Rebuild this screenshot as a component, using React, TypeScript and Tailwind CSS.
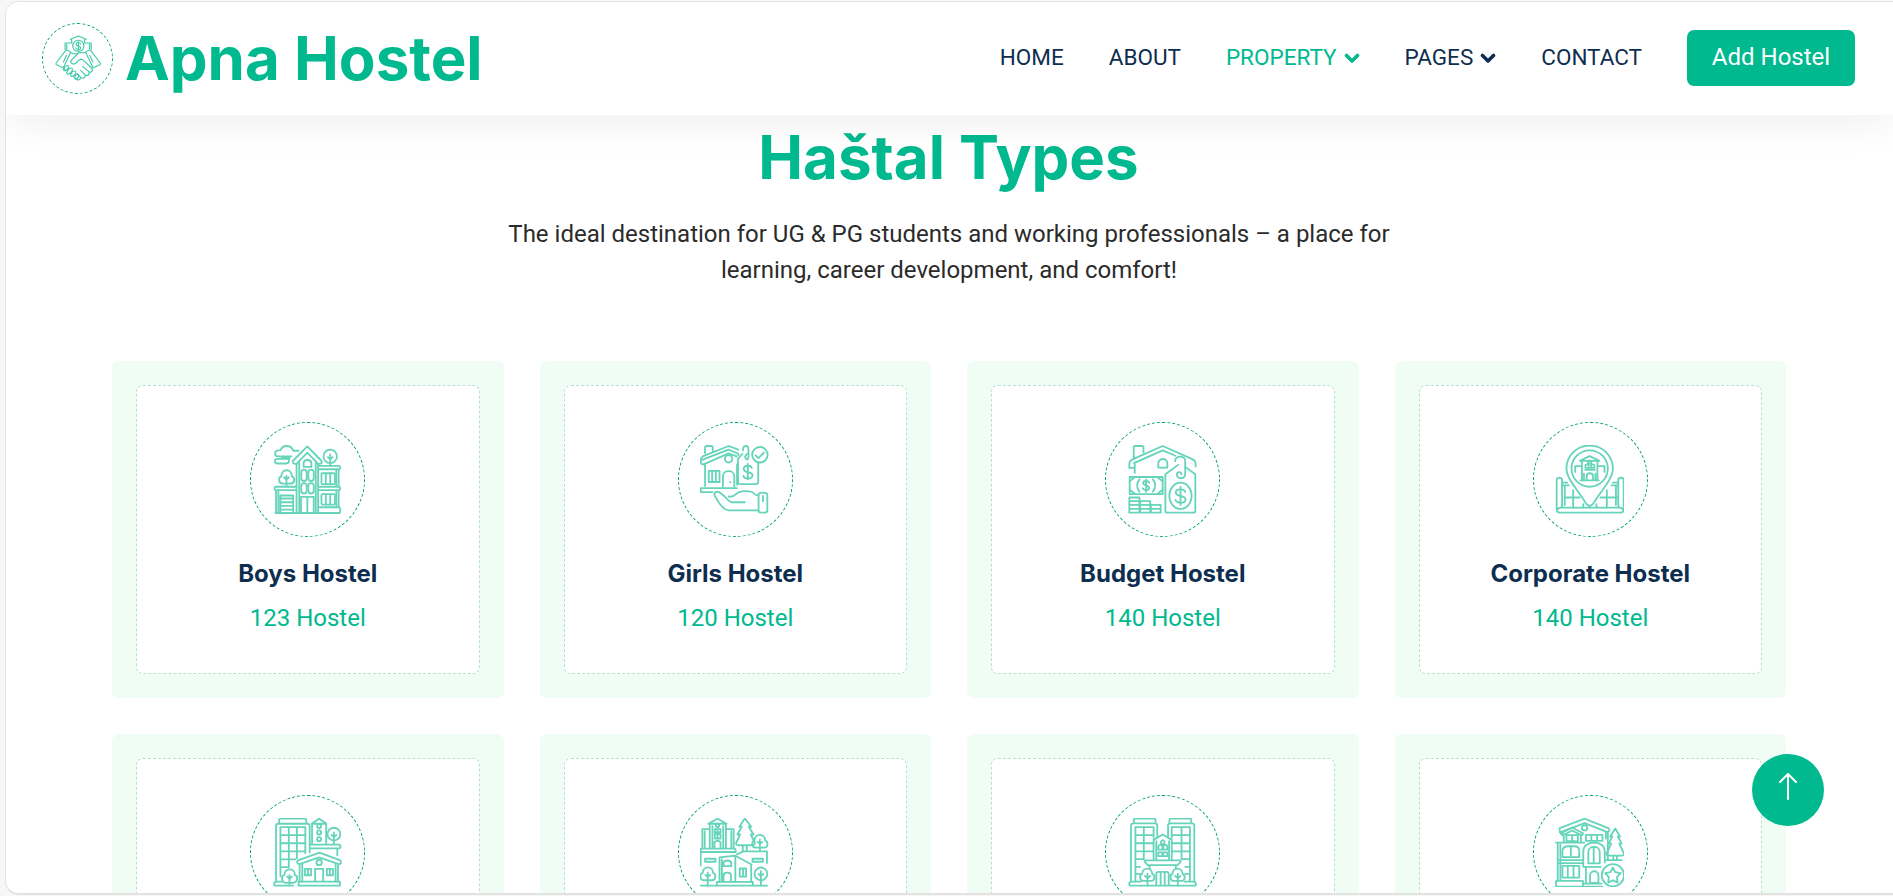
import React from "react";

type IconProps = { className?: string };

const stroke = {
  fill: "none",
  stroke: "#00b98e",
  strokeWidth: 5.4,
  strokeLinecap: "round" as const,
  strokeLinejoin: "round" as const,
};

function Art({ top, children }: { top: number; children: React.ReactNode }) {
  return (
    <svg viewBox={`100 ${top} 205 205`} className="mr-px mb-px size-[69px] opacity-60" {...stroke}>
      {children}
    </svg>
  );
}

function TownHouse() {
  return (
    <Art top={90}>
      <path d="M176 107h-16c-3-9-9-14-20-14-9 0-15 6-17 12-10 0-17 4-17 10s5 9 11 9h38" />
      <path d="M126 126h23M149 131h-35c-11 0-12 14 0 14h24c10 0 12-8 8-12" />
      <path d="M202 94l-42 42c-4 4 0 10 5 10h5l32-33 32 33h5c6 0 8-6 4-10z" />
      <path d="M170 146v146M234 146v146M178 142v150M227 142v150" />
      <path d="M191 155v-10c0-14 23-14 23 0v10z" />
      <rect x="184" y="163" width="16" height="34" rx="8" /><rect x="205" y="163" width="16" height="34" rx="8" />
      <rect x="184" y="203" width="16" height="31" rx="8" /><rect x="205" y="203" width="16" height="31" rx="8" />
      <path d="M183 292v-48h38v48M202 244v48" />
      <circle cx="270" cy="124" r="20" /><path d="M270 118v34M263 126l7 7 7-7" />
      <path d="M236 152h60c5 0 5 10 0 10h-60M295 163v50M288 163v50M236 214h60c5 0 5 10 0 10h-60M295 225v50M288 225v50M236 275h60c5 0 5 17 0 17" />
      <rect x="244" y="174" width="40" height="32" rx="3" /><path d="M257 174v32M270 174v32" />
      <rect x="244" y="236" width="40" height="31" rx="3" /><path d="M257 236v31M270 236v31" />
      <path d="M130 205c-14 0-16-18-5-22 0-24 31-24 31 0 11 4 9 22-5 22zM140 182v30M133 186l7 7 7-7" />
      <path d="M168 214h-60c-5 0-5 10 0 10h60M109 225v67M116 225v67M122 292v-52h38v52M122 249h38M122 260h38M122 271h38M122 282h38M107 292h190" />
    </Art>
  );
}

function HouseInHand() {
  return (
    <Art top={90}>
      <path d="M115 114V98q0-5 5-5h13q5 0 5 5v10" />
      <path d="M214 104l-29-11-77 31c-6 3-6 9-6 14 0 8 4 12 12 8l71-31 24 9M214 120v-4l-29-12-79 30" />
      <path d="M115 148v64M210 148v60M102 218h108M102 230h35M102 218v8q0 4 5 4" />
      <circle cx="185" cy="131" r="11" />
      <rect x="126" y="167" width="32" height="33" /><path d="M136 167v33M147 167v33" />
      <path d="M168 214v-32c0-19 34-19 34 0v32M190 200v1" />
      <path d="M228 106c0-18 16-18 16 0v20c0 8-5 8-8 5l-2-7 5-7M226 116l-13 15v69q0 6 6 6h48q6 0 6-6v-55" />
      <path d="M254 158c-3-9-24-9-24 3 0 14 26 6 26 19 0 13-24 12-27 2M242 146v46" />
      <circle cx="278" cy="119" r="23" /><path d="M265 121l8 8 17-16" />
      <path d="M233 260h-38c-11 0-24-24-39-30-11-4-16 4-12 11 9 17 25 43 42 43h87M185 243c8 2 16-1 22-7 12-12 46-11 53-2 5 6 8 6 14 6" />
      <rect x="274" y="232" width="26" height="59" rx="7" /><path d="M287 241v16" />
    </Art>
  );
}

function Budget() {
  return (
    <Art top={90}>
      <path d="M117 132V97q0-4 4-4h21q4 0 4 4v15M104 158v-12q0-10 11-14l88-39 88 39q10 4 10 14v8M104 158h16M120 160v13M118 144l85-38 38 16M120 158v-12" />
      <path d="M190 157v-12c0-18 27-18 27 0v12z" />
      <path d="M211 285V177l38-28M211 285q0 6 6 6h77q6 0 6-6V177l-30-22" />
      <path d="M240 138c0-18 30-18 30 0v36c0 20-25 18-25 4 0-10 14-10 14-1" />
      <ellipse cx="256" cy="241" rx="33" ry="39" />
      <path d="M270 229c-3-10-28-10-28 2 0 15 29 6 29 21 0 13-26 12-30 1M256 214v54" />
      <path d="M203 185h-98v51h98z" />
      <path d="M163 202c-3-7-18-7-18 1 0 9 18 5 18 15 0 8-16 8-19 1M154 192v37M105 198l15-12M105 223l15 12M203 198l-15-12M203 223l-15 12M134 192q-14 18 0 37M174 192q14 18 0 37" />
      <path d="M104 246h30v45h-30zM104 257h62v34M104 268h93v23h-93M104 280h93M136 257v34M168 268v23" />
    </Art>
  );
}

function MapPin() {
  return (
    <Art top={90}>
      <path d="M203 92c-39 0-69 30-69 68 0 31 35 64 57 102 7 11 18 11 24 0 23-38 57-71 57-102 0-38-30-68-69-68z" />
      <circle cx="203" cy="160" r="54" />
      <path d="M180 195v-58M226 195v-58M174 137l29-14 29 14zM160 170v-17h20M247 170v-17h-20M176 195h54M194 195v-12c0-12 19-12 19 0v12M186 195v-20M220 195v-20M190 158h28M190 164h28" />
      <circle cx="203" cy="141" r="5" /><path d="M190 153c0-7 10-7 10 0M207 153c0-7 10-7 10 0" />
      <path d="M105 282v-87c0-11 16-11 16 0v81h167v-81c0-11 16-11 16 0v87q0 9-9 9H114q-9 0-9-9zM121 276q-9-2-14 6M288 276q9-2 14 6" />
      <path d="M121 202h16M272 202h16M129 212v56M281 212v56M121 210h20M268 210h20M129 246h44M235 246h53M154 224v52M254 224v52M184 266v10M223 266v10M203 272v4" />
    </Art>
  );
}

function Apartments() {
  return (
    <Art top={97}>
      <path d="M118 113v-9q0-5 5-5h71q5 0 5 5v9M109 286V121q0-7 7-7h86q7 0 7 7v78M122 270V124h74v78M147 124v120M171 124v92M122 148h74M122 172h74M122 196h74M122 220h45M122 243h22" />
      <path d="M216 174v-61l21-14 21 14v61M216 114h42" />
      <circle cx="237" cy="121" r="6" /><circle cx="237" cy="140" r="6" /><circle cx="237" cy="160" r="6" />
      <circle cx="281" cy="145" r="19" /><path d="M281 140v35M274 147l7 7 7-7" />
      <path d="M212 176h84c6 0 6 11 0 11h-84M291 188v20" />
      <path d="M238 200l-62 22c-7 4-5 12 3 12l58-20 58 20c9 0 9-8 3-12zM179 234v52M293 234v52M187 234v52M286 234v52" />
      <circle cx="237" cy="229" r="8" />
      <path d="M225 284v-36h24v36M195 248h18v19h-18zM260 248h18v19h-18zM204 248v19M269 248v19M176 286h123v12H176z" />
      <path d="M139 290c-15-2-16-21-5-24 0-22 31-22 31 0 11 4 9 22-5 24zM149 266v32M142 271l7 7 7-7M128 286h-16c-12 0-9 12-6 12h54" />
    </Art>
  );
}

function CityBlock() {
  return (
    <Art top={97}>
      <path d="M129 185v-71M177 185v-71M125 114l27-15 27 15zM107 187v-57h22M200 187v-57h-23M114 184v-48M193 184v-48M137 185v-64M169 185v-64M143 186v-17q9-9 18 0v17" />
      <circle cx="152" cy="119" r="5" />
      <path d="M144 130h17v10h-17zM144 145h17v13h-17zM152 130v28M102 188h99q5 0 5 5v6M102 188v50M102 198h103" />
      <path d="M233 98l-16 25h7l-13 23h8l-11 23q-3 9 6 9h42q9 0 6-9l-11-23h8l-14-23h7zM227 179v17M239 179v17M210 205l19-9h70v35" />
      <path d="M265 185c-12 0-13-18-3-21 1-23 31-22 32 0 10 4 8 21-3 21zM278 161v35M271 168l7 6 7-6" />
      <path d="M158 214l47-5 48 26M158 216v71M252 235v52M165 220v64M205 210v77M170 240v-7c0-13 23-13 23 0v7zM170 286v-19c0-10 22-10 22 0v19M218 247h19v24h-19zM228 247v24" />
      <path d="M115 218h31v9h-31zM256 218h31v9h-31zM150 298v-11h107v11M102 298h197" />
      <path d="M111 282c-12 0-13-19-3-22 1-22 30-22 31 0 10 4 8 22-3 22zM123 259v38M116 266l7 7 7-7" />
      <circle cx="281" cy="263" r="19" /><path d="M281 255v42M274 263l7 7 7-7" />
    </Art>
  );
}

function TwinTowers() {
  return (
    <Art top={97}>
      <path d="M117 113v-9q0-5 5-5h55q5 0 5 5v9M109 286V120q0-7 7-7h64q7 0 7 7v34M122 284V124h54v32M147 124v96M122 148h53M122 172h53M122 196h52M122 219h22M122 242h14M122 263h14" />
      <path d="M223 113v-9q0-5 5-5h55q5 0 5 5v9M297 286V120q0-7-7-7h-64q-7 0-7 7v34M284 284V124h-54v32M259 124v96M284 148h-53M284 172h-53M284 196h-52M284 219h-22M284 242h-14M284 263h-14" />
      <path d="M176 220v-58l27-16 27 16v58M184 220v-54M222 220v-54" />
      <path d="M198 175v-7q5-10 10 0v7zM190 184q0-7 6-7t6 7v7h-12zM205 184q0-7 6-7t6 7v7h-12zM190 199h12v11h-12zM205 199h12v11h-12z" />
      <path d="M153 223h99q7 0 3 6l-8 8h-88l-8-8q-4-6 2-6zM164 238v10M242 238v10" />
      <path d="M146 284c-12 0-13-18-4-21 1-21 29-21 30 0 10 4 8 21-3 21zM158 262v36M150 269l8 7 8-7" />
      <path d="M236 284c-12 0-13-18-4-21 1-21 29-21 30 0 10 4 8 21-3 21zM248 262v36M240 269l8 7 8-7" />
      <path d="M184 298v-34q0-7 7-7h23q7 0 7 7v34M197 257v41M209 257v41M138 286h-27c-10 0-8 12-5 12h193c4 0 5-12-5-12h-26" />
    </Art>
  );
}

function Villa() {
  return (
    <Art top={233}>
      <path d="M114 275v-12l74-28 70 28q6 4 2 9-4 4-10 1l-62-25-73 28M124 280l-6 0M251 274v20M257 274v84" />
      <circle cx="188" cy="262" r="8" />
      <path d="M118 279l33-18 33 18-5 6-28-15-28 15zM126 283v22M177 283v22M134 302v-18h34v18zM151 284v18M192 283h49v18h-49zM208 283v18M225 283v18" />
      <path d="M103 306h84M108 307v111M116 312v106M108 358h76M108 367h76M103 420h80v17h-80z" />
      <path d="M122 349v-18q2-14 16-14h20q14 0 14 14v18zM147 318v31M122 375h50v35h-50zM138 375v35M155 375v35" />
      <path d="M184 378v-45c0-36 64-36 64 0v32M199 368v-34c0-20 34-20 34 0v34zM215 320v48M184 378h52M192 378v50M184 428h54M184 437h56" />
      <path d="M204 426v-22c0-17 25-17 25 0v22z" />
      <path d="M279 264l-15 24h6l-10 21h7l-13 28q-2 8 6 8h38q8 0 6-8l-13-28h7l-11-21h6zM273 346v11M284 346v11M252 358h46" />
      <circle cx="272" cy="403" r="33" /><path d="M272 380l7 14 16 3-11 12 2 16-14-7-14 7 2-16-11-12 16-3z" />
    </Art>
  );
}

function Handshake({ className }: IconProps) {
  return (
    <svg viewBox="163 106 138 139" className={className} {...stroke} strokeWidth={3.4}>
      <path d="M193 150v-20h20v-12M272 150v-20h-20v-12M209 119l24-10 24 10M198 134v15M267 134v15" />
      <circle cx="233" cy="139" r="17" />
      <path d="M240 133c-2-6-14-6-14 1 0 8 14 3 14 11 0 7-13 6-15 0M233 126v27" />
      <path d="M193 155q5-5 12-1l5 4-22 46-6-1-15-7q-3-3 0-7zM188 188l9-20" />
      <path d="M272 155q-5-5-12-1l-5 4 22 46 6-1 15-7q3-3 0-7zM277 188l-9-20" />
      <path d="M210 160q12 6 23 0l22-1M233 161l-22 22c-4 8 7 13 13 9l15-13 8 2 25 24c9 9-1 17-8 11l-18-15M264 216c6 9-4 17-11 10l-13-13M253 226c3 9-6 14-13 8l-10-11M240 234c0 8-9 10-14 5l-8-7M188 204l6 8" />
      <path d="M203 199c-5-4-19 9-14 14 6 5 19-10 14-14zM214 207c-6-5-20 11-15 16 6 5 21-11 15-16zM224 216c-6-5-18 9-13 14 6 5 19-10 13-14zM233 226c-5-4-14 6-10 11 5 5 15-7 10-11z" />
    </svg>
  );
}

function Chevron() {
  return (
    <svg viewBox="0 0 16 11" className="mt-0.5 h-[11px] w-4" fill="none" stroke="currentColor" strokeWidth="3.6" strokeLinecap="round" strokeLinejoin="round">
      <path d="M2.500 2.500 8 8l5.500-5.500" />
    </svg>
  );
}

const types = [
  { name: "Boys Hostel", count: 123, Icon: TownHouse },
  { name: "Girls Hostel", count: 120, Icon: HouseInHand },
  { name: "Budget Hostel", count: 140, Icon: Budget },
  { name: "Corporate Hostel", count: 140, Icon: MapPin },
  { Icon: Apartments },
  { Icon: CityBlock },
  { Icon: TwinTowers },
  { Icon: Villa },
];

const links = [
  { label: "HOME" },
  { label: "ABOUT" },
  { label: "PROPERTY", menu: true, active: true },
  { label: "PAGES", menu: true },
  { label: "CONTACT" },
];

function Header() {
  return (
    <header className="relative z-10 flex h-[113px] shrink-0 items-center bg-white pr-[38px] pb-0.5 pl-9 shadow-[0_8px_40px_rgba(0,0,0,0.065)]">
      <div className="mt-[1px] flex size-[71px] items-center justify-center rounded-full border border-dashed border-[#00a07a]">
        <Handshake className="size-[46px] opacity-75" />
      </div>
      <span className="ml-3 font-[Inter,sans-serif] text-[60px] leading-[72px] font-bold text-[#00b98e]">Apna Hostel</span>
      <nav className="ml-auto flex items-center gap-[45px] text-[22.5px] font-[450] text-[#0e2e50]">
        {links.map((l) => (
          <a key={l.label} className={l.active ? "flex items-center gap-[7px] text-[#00b98e]" : "flex items-center gap-[7px]"}>
            {l.label}
            {l.menu && <Chevron />}
          </a>
        ))}
      </nav>
      <button className="ml-[45px] h-14 w-[168px] rounded-[7px] bg-[#00b98e] pb-0.5 text-[24px] text-white">Add Hostel</button>
    </header>
  );
}

export default function App() {
  return (
    <div className="h-[896px] overflow-hidden bg-[#f7f7f7] pt-px pl-[5px] font-[Roboto,sans-serif]">
      <div className="relative flex h-[894px] flex-col overflow-hidden rounded-l-[14px] border border-r-0 border-b-2 border-[#e2e2e2] bg-white">
        <Header />
        <main className="pt-1.5 pr-[107px] pl-[106px]">
          <h1 className="pr-px text-center font-[Inter,sans-serif] text-[60px] leading-[72px] font-bold text-[#00b98e]">Haštal Types</h1>
          <p className="mx-auto mt-[23px] w-[900px] text-center text-[24px] leading-9 text-[#2b2b2b]">
            The ideal destination for UG &amp; PG students and working professionals – a place for learning, career development, and comfort!
          </p>
          <div className="mt-[73px] grid grid-cols-4 gap-9">
            {types.map(({ name, count, Icon }, i) => (
              <a key={i} className="block h-[337px] rounded-[7px] bg-[#effdf5] p-6">
                <div className="flex h-full flex-col items-center rounded-[7px] border border-dashed border-[#b5e0d5] bg-white pt-9">
                  <div className="flex size-[115px] shrink-0 items-center justify-center rounded-full border border-dashed border-[#00a07a]">
                    <Icon />
                  </div>
                  {name && <h2 className="mt-[22px] font-[Inter,sans-serif] text-[24px] leading-[29px] font-bold text-[#0e2e50]">{name}</h2>}
                  {count && <span className="mt-3 text-[24px] leading-9 text-[#00b98e]">{count} Hostel</span>}
                </div>
              </a>
            ))}
          </div>
        </main>
        <a className="absolute top-[752px] left-[1746px] z-20 flex size-[72px] items-start justify-center rounded-full bg-[#00b98e] pt-[18px]">
          <svg viewBox="0 0 20 28" className="h-7 w-5" fill="none" stroke="white" strokeWidth="2" strokeLinecap="round" strokeLinejoin="round">
            <path d="M10 27V2M2 10l8-8 8 8" />
          </svg>
        </a>
      </div>
    </div>
  );
}
